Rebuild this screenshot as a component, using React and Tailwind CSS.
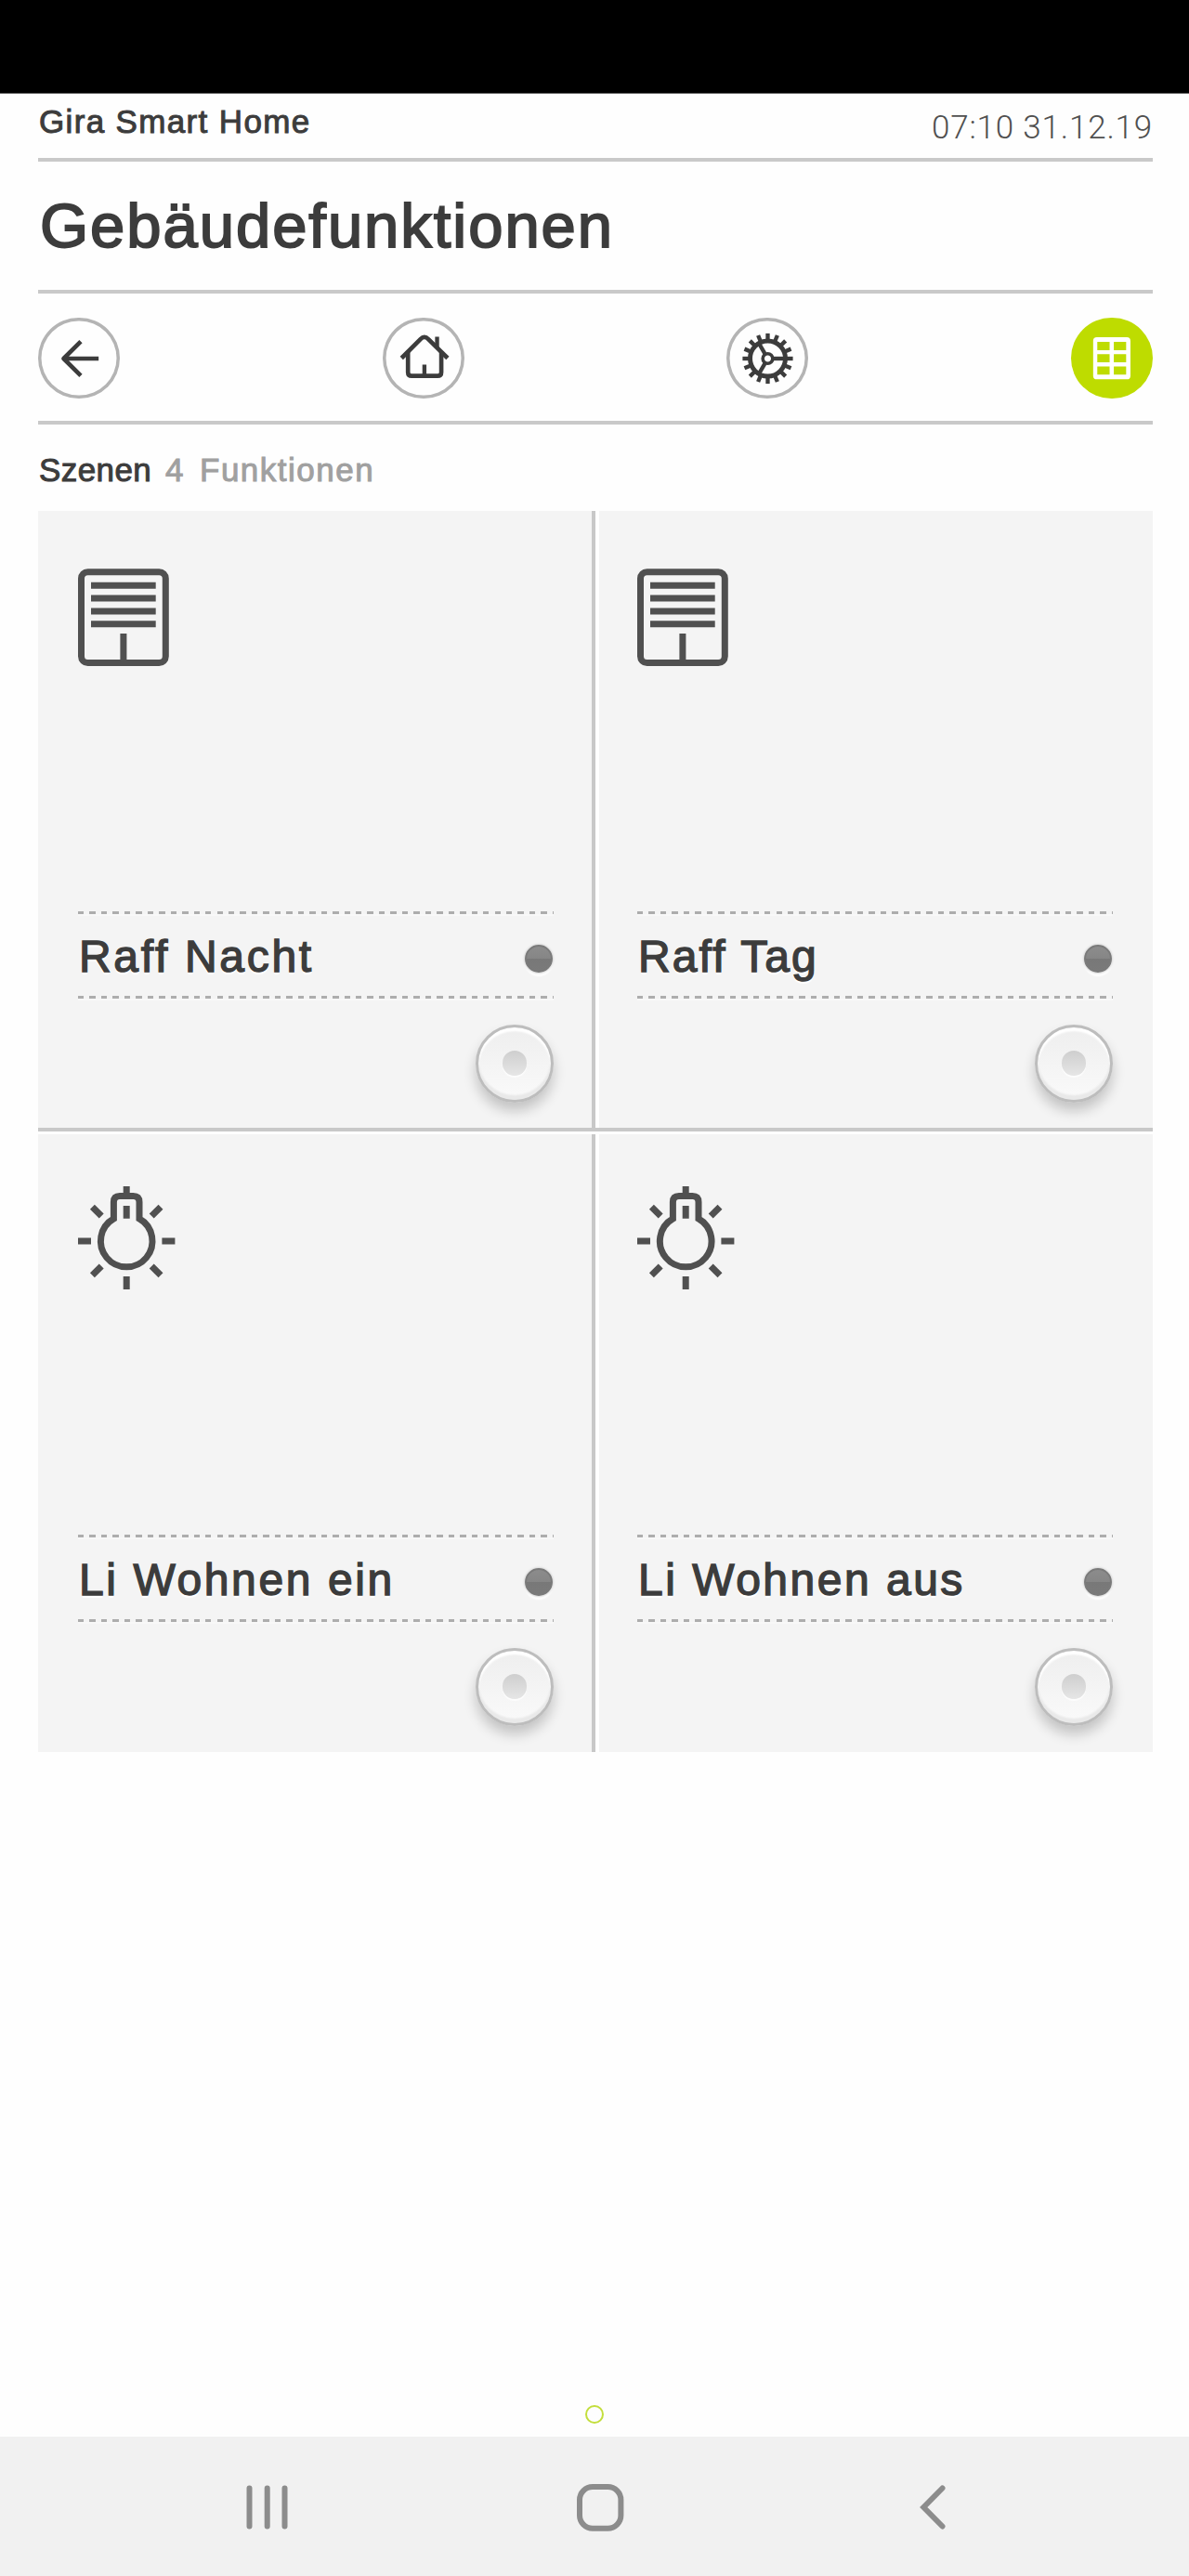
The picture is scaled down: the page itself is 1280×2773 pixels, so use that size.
import { clsx } from "clsx";

const scenes = [
  { name: "Raff Nacht", icon: "blind", tracking: "tracking-[2.7px]" },
  { name: "Raff Tag", icon: "blind", tracking: "tracking-[2.1px]" },
  { name: "Li Wohnen ein", icon: "bulb", tracking: "tracking-[2.6px]" },
  { name: "Li Wohnen aus", icon: "bulb", tracking: "tracking-[2.5px]" },
];

const teeth = Array.from({ length: 16 }, (_, i) => i * 22.5);

function BackIcon() {
  return (
    <svg viewBox="0 0 88 88" className="h-full w-full" fill="none" stroke="#3c3c3c" strokeWidth="4.7">
      <path d="M65.4 44.5H27M46 26 27.3 44.5 46 63" strokeLinejoin="round" />
    </svg>
  );
}

function HomeIcon() {
  return (
    <svg viewBox="0 0 88 88" className="h-full w-full" fill="none" stroke="#3c3c3c" strokeWidth="4.7">
      <path d="M20 44 40.6 23.3Q44.9 18.9 49.2 23.3L70.2 44" />
      <path d="M27 37V59.3Q27 63.4 31 63.4H59.3Q63.3 63.4 63.3 59.3V37" />
      <path d="M58.7 20.7V33M44.9 51V63" strokeWidth="4.4" />
    </svg>
  );
}

function GearIcon() {
  return (
    <svg viewBox="0 0 88 88" className="h-full w-full" fill="none" stroke="#3c3c3c" strokeWidth="4.4">
      <g transform="translate(44.5 44.5)">
        <circle r="19.2" strokeWidth="5" />
        <circle r="5.4" strokeWidth="3.6" />
        {teeth.map((a) => (
          <path key={a} d="M20 0H27.4" transform={`rotate(${a})`} />
        ))}
        {[0, 120, 240].map((a) => (
          <path key={a} d="M6 0H19" transform={`rotate(${a})`} />
        ))}
      </g>
    </svg>
  );
}

function GridIcon() {
  return (
    <svg viewBox="0 0 88 88" className="h-full w-full">
      <rect x="23.6" y="21.3" width="40.6" height="45.8" rx="4" fill="#fff" />
      <g fill="#bedc00">
        {[26.3, 39.6, 53].map((y) => (
          <path key={y} d={`M28.1 ${y}h13.4v9h-13.4zM46.1 ${y}h13.4v9h-13.4z`} />
        ))}
      </g>
    </svg>
  );
}

function BlindIcon() {
  return (
    <svg viewBox="0 0 98 105" className="mt-[7px] h-[105px] w-[98px]" fill="none" stroke="#505050" strokeWidth="7">
      <rect x="3.5" y="3.7" width="90.8" height="97.8" rx="7" />
      <path d="M14 18.3H83.7M14 32H83.7M14 46H83.7M14 59.7H83.7M48.9 70V101" />
    </svg>
  );
}

function BulbIcon() {
  return (
    <svg viewBox="-52.2 -59 105 112" className="mt-px h-[112px] w-[105px]" fill="none" stroke="#505050" strokeWidth="7">
      <path d="M-13.8-24.1V-42Q-13.8-48.5-7.3-48.5H7.3Q13.8-48.5 13.8-42V-24.1A27.8 27.8 0 1 1-13.8-24.1Z" />
      <path d="M0-59V-48M0-38V-24.3M0 38V52M-52.2 0H-38.2M38.2 0H52.2" />
      <path d="M-36.8-36.8-27-27M36.8-36.8 27-27M-36.8 36.8-27 27M36.8 36.8 27 27" />
    </svg>
  );
}

function ToolButton({ active, children }) {
  return (
    <button
      className={clsx(
        "h-[87px] w-[88px] rounded-full",
        active ? "bg-[#bedc00]" : "shadow-[inset_0_0_0_3.5px_#b4b4b4]"
      )}
    >
      {children}
    </button>
  );
}

function Rule() {
  return <div className="h-[4px] w-full bg-[#c9c9c9]" />;
}

function DashedLine() {
  return (
    <div className="h-[3px] w-full bg-[repeating-linear-gradient(90deg,#adadad_0_6.4px,transparent_6.4px_12.46px)] shadow-[0_2px_0_#f8f8f8]" />
  );
}

function SceneTile({ scene, className }) {
  return (
    <div className={clsx("flex h-full flex-col bg-[#f4f4f4]", className)}>
      <div className="h-[431px] pt-[55px]">{scene.icon === "blind" ? <BlindIcon /> : <BulbIcon />}</div>
      <DashedLine />
      <div className="flex h-[88px] items-center justify-between pl-px">
        <span
          className={clsx(
            "pt-[3px] text-[48px] leading-[85px] whitespace-nowrap [-webkit-text-stroke:1.4px_#3c3c3c] [text-shadow:0_3px_1px_#fff]",
            scene.tracking
          )}
        >
          {scene.name}
        </span>
        <span className="mt-[8px] mr-[1px] h-[30px] w-[30px] rounded-full border-2 border-[#7a7a7a] bg-[linear-gradient(#8c8c8c,#868686_48%,#787878_50%,#7a7a7a)] shadow-[0_0_2px_1px_#d8d8d8,0_4px_2px_#fff]" />
      </div>
      <DashedLine />
      <div className="flex justify-end pt-[28px]">
        <button className="flex h-[84px] w-[84px] items-center justify-center rounded-full border-[3.5px] border-[#bdbdbd] bg-[linear-gradient(#eeeeee,#fafafa)] shadow-[0_9px_14px_rgba(0,0,0,0.2),inset_0_4px_2px_#fff,inset_0_-5px_2px_#e9e9e9]">
          <span className="mb-[1px] h-[27px] w-[26px] rounded-full bg-[linear-gradient(#cecece,#e6e6e6)] shadow-[0_2px_1px_#fdfdfd]" />
        </button>
      </div>
    </div>
  );
}

function SystemNav() {
  return (
    <nav className="flex h-[150px] items-start bg-[#f1f1f1] pt-[50px] pl-[265px]">
      <svg viewBox="0 0 46 52" className="h-[52px] w-[46px]" stroke="#8c8c8c" strokeWidth="6" strokeLinecap="round">
        <path d="M3.5 5.5V46.5M22.7 5.5V46.5M41.5 5.5V46.5" />
      </svg>
      <svg viewBox="0 0 52 52" className="ml-[309px] h-[52px] w-[52px]" fill="none" stroke="#8c8c8c" strokeWidth="6">
        <rect x="4" y="4" width="44.4" height="44.8" rx="14" />
      </svg>
      <svg viewBox="0 0 30 52" className="ml-[317px] h-[52px] w-[30px]" fill="none" stroke="#8c8c8c" strokeWidth="6" strokeLinecap="round">
        <path d="M25.5 5.5 5.3 26 25.5 46.5" />
      </svg>
    </nav>
  );
}

export default function App() {
  return (
    <div className="flex h-[2773px] w-[1280px] flex-col bg-[#fefefe] font-['Liberation_Sans',Arial,sans-serif] text-[#3c3c3c]">
      <div className="h-[101px] border-b border-[#666] bg-black" />

      <div className="pr-[39px] pl-[41px]">
        <header className="flex h-[69px] justify-between pl-px">
          <span className="pt-[10px] text-[35px] leading-[40px] tracking-[1.35px] [-webkit-text-stroke:1px_#3c3c3c]">
            Gira Smart Home
          </span>
          <span className="pt-[17px] font-[Roboto] text-[35px] leading-[40px] font-light tracking-[0.8px] text-[#505050]">
            07:10 31.12.19
          </span>
        </header>
        <Rule />

        <h1 className="h-[138px] pl-[2px] text-[67px] leading-[138px] tracking-[1.95px] [-webkit-text-stroke:1.9px_#3c3c3c]">
          Gebäudefunktionen
        </h1>
        <Rule />

        <div className="flex h-[137px] items-start justify-between pt-[26px]">
          <ToolButton>
            <BackIcon />
          </ToolButton>
          <ToolButton>
            <HomeIcon />
          </ToolButton>
          <ToolButton>
            <GearIcon />
          </ToolButton>
          <ToolButton active>
            <GridIcon />
          </ToolButton>
        </div>
        <Rule />

        <div className="flex h-[93px] pt-[29px] pl-px text-[35px] leading-[40px]">
          <span className="w-[136px] tracking-[0.4px] [-webkit-text-stroke:1px_#3c3c3c]">Szenen</span>
          <span className="w-[37px] text-[#a0a0a0] [-webkit-text-stroke:1px_#a0a0a0]">4</span>
          <span className="tracking-[1.5px] text-[#a0a0a0] [-webkit-text-stroke:1px_#a0a0a0]">Funktionen</span>
        </div>

        {/* scene tiles */}
        <div className="grid h-[664px] grid-cols-[596px_4px_4px_596px]">
          <SceneTile scene={scenes[0]} className="pr-[41px] pl-[43px]" />
          <div className="bg-[#c8c8c8]" />
          <div className="bg-white" />
          <SceneTile scene={scenes[1]} className="pr-[43px] pl-[41px]" />
        </div>
        <div className="mb-[3px] h-[4px] bg-[#c8c8c8]" />
        <div className="grid h-[665px] grid-cols-[596px_4px_4px_596px]">
          <SceneTile scene={scenes[2]} className="pr-[41px] pl-[43px]" />
          <div className="bg-[#c8c8c8]" />
          <div className="bg-white" />
          <SceneTile scene={scenes[3]} className="pr-[43px] pl-[41px]" />
        </div>
      </div>

      {/* page indicator */}
      <div className="flex grow items-end justify-center pb-[14px]">
        <span className="h-[20px] w-[20px] rounded-full border-[2.5px] border-[#c3de3c]" />
      </div>

      <SystemNav />
    </div>
  );
}
